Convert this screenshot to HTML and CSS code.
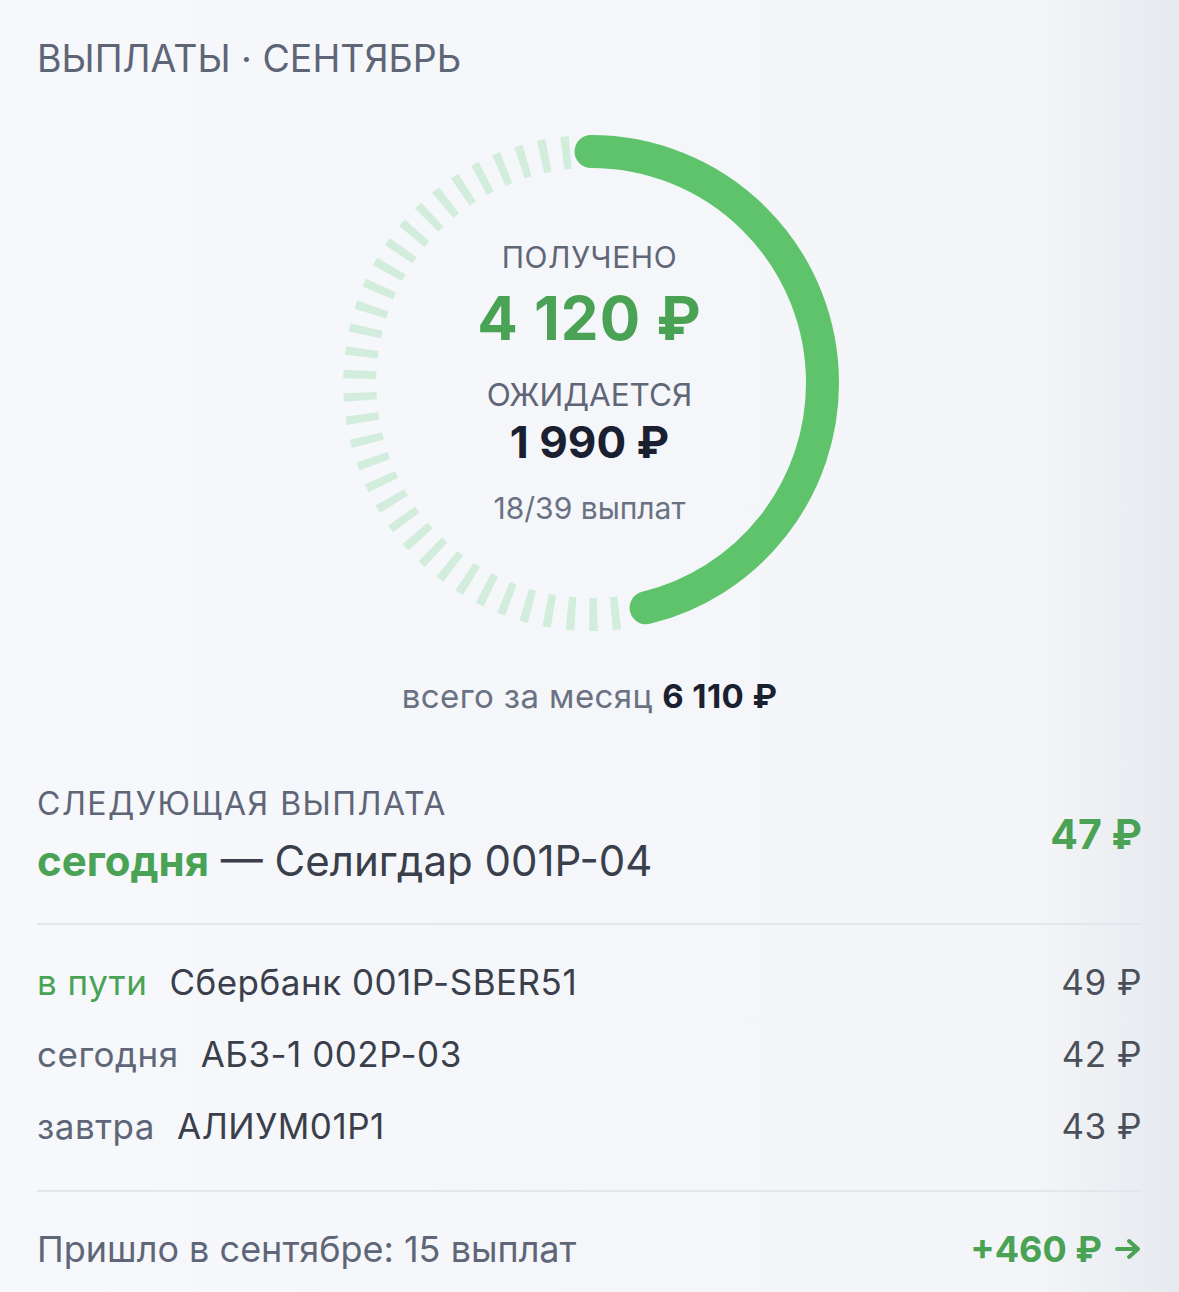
FILE: index.html
```html
<!DOCTYPE html>
<html lang="ru">
<head>
<meta charset="utf-8">
<title>Выплаты</title>
<link rel="stylesheet" href="styles.css">
</head>
<body>
<div class="page">
  <div class="title">ВЫПЛАТЫ · СЕНТЯБРЬ</div>

  <div class="ring">
    <svg class="ring-svg" viewBox="0 0 496 496" width="496" height="496">
      <path class="ticks" d="M 276.2 477.8 A 231.5 231.5 0 1 1 227.8 17.4"/>
      <circle class="progress" cx="248" cy="248" r="231.5" transform="rotate(-90 248 248)"/>
    </svg>
    <div class="ring-text">
      <div class="lbl lbl-got">ПОЛУЧЕНО</div>
      <div class="got">4 120 ₽</div>
      <div class="lbl lbl-exp">ОЖИДАЕТСЯ</div>
      <div class="exp">1 990 ₽</div>
      <div class="count">18/39 выплат</div>
    </div>
  </div>

  <div class="total">всего за месяц <b>6 110 ₽</b></div>

  <div class="next">
    <div class="next-info">
      <div class="next-label">СЛЕДУЮЩАЯ ВЫПЛАТА</div>
      <div class="next-name"><span class="green-b">сегодня</span> — Селигдар 001P-04</div>
    </div>
    <div class="next-sum">47 ₽</div>
  </div>

  <div class="divider"></div>

  <div class="rows">
    <div class="row">
      <div class="row-left"><span class="when when-green">в пути</span><span class="name">Сбербанк 001P-SBER51</span></div>
      <div class="sum">49 ₽</div>
    </div>
    <div class="row">
      <div class="row-left"><span class="when">сегодня</span><span class="name">АБЗ-1 002P-03</span></div>
      <div class="sum">42 ₽</div>
    </div>
    <div class="row">
      <div class="row-left"><span class="when">завтра</span><span class="name">АЛИУМ01P1</span></div>
      <div class="sum">43 ₽</div>
    </div>
  </div>

  <div class="divider divider-2"></div>

  <div class="footer">
    <div class="foot-text">Пришло в сентябре: 15 выплат</div>
    <div class="foot-sum">+460 ₽
      <svg class="arrow" viewBox="0 0 28 22" width="28" height="22">
        <path d="M3 11 H24 M15 3 L24 11 L15 19"/>
      </svg>
    </div>
  </div>
</div>
</body>
</html>
```

FILE: styles.css
```css
html, body {
  margin: 0;
  padding: 0;
}
body {
  width: 1179px;
  height: 1292px;
  overflow: hidden;
  background: linear-gradient(90deg, #f6f8fb 0%, #f3f5f8 88%, #e6e9ee 100%);
  font-family: Inter, "Noto Sans", sans-serif;
  color: #5f6677;
}
.page {
  padding: 36px 37px 0 37px;
}
.title {
  font-size: 37.5px;
  line-height: 46px;
  letter-spacing: 0;
  color: #5e6576;
}
.ring {
  margin-top: 53px;
  display: grid;
  justify-content: center;
  padding-left: 3px;
}
.ring-svg, .ring-text {
  grid-area: 1 / 1;
}
.ring-svg {
  display: block;
}
.ticks {
  fill: none;
  stroke: #d2eddb;
  stroke-width: 33;
  stroke-dasharray: 8 14;
}
.progress {
  fill: none;
  stroke: #5fc36b;
  stroke-width: 33;
  stroke-linecap: round;
  stroke-dasharray: 671.3 2000;
}
.ring-text {
  display: flex;
  flex-direction: column;
  align-items: center;
  padding-top: 104px;
  margin-left: -3px;
}
.lbl {
  color: #5f6677;
}
.lbl-got {
  font-size: 30px;
  line-height: 36px;
  letter-spacing: 0.6px;
}
.got {
  margin-top: 11px;
  font-size: 60px;
  line-height: 64px;
  font-weight: 700;
  letter-spacing: 1px;
  color: #4aa255;
}
.lbl-exp {
  margin-top: 25px;
  font-size: 31.5px;
  line-height: 40px;
  letter-spacing: 0;
}
.exp {
  margin-top: 2px;
  font-size: 44px;
  line-height: 50px;
  font-weight: 700;
  color: #1b2030;
}
.count {
  margin-top: 22px;
  font-size: 30px;
  line-height: 38px;
  color: #6a7182;
}
.total {
  margin-top: 46px;
  text-align: center;
  font-size: 33px;
  line-height: 38px;
  letter-spacing: 0.4px;
  color: #6a7182;
}
.total b {
  font-weight: 700;
  color: #1b2030;
}
.next {
  margin-top: 69px;
  display: flex;
  justify-content: space-between;
  align-items: center;
}
.next-label {
  font-size: 32px;
  line-height: 40px;
  letter-spacing: 1.5px;
  color: #5f6677;
}
.next-name {
  margin-top: 10px;
  font-size: 42px;
  line-height: 54px;
  color: #3a3f4b;
}
.green-b {
  color: #4aa255;
  font-weight: 700;
}
.next-sum {
  font-size: 41px;
  line-height: 48px;
  font-weight: 700;
  color: #4aa255;
  margin-top: -4px;
}
.divider {
  margin-top: 35px;
  height: 2px;
  background: #e3e6eb;
}
.rows {
  margin-top: 21px;
}
.row {
  display: flex;
  justify-content: space-between;
  align-items: baseline;
  font-size: 35px;
  line-height: 72px;
  letter-spacing: 0.5px;
}
.when {
  color: #5f6677;
  margin-right: 22px;
}
.when-green {
  color: #4aa255;
}
.name {
  color: #3a3f4b;
}
.sum {
  color: #4a4f5a;
}
.divider-2 {
  margin-top: 28px;
}
.footer {
  margin-top: 35px;
  display: flex;
  justify-content: space-between;
  align-items: center;
  line-height: 44px;
}
.foot-text {
  font-size: 36px;
  color: #5f6677;
}
.foot-sum {
  display: flex;
  align-items: center;
  gap: 12px;
  font-size: 36px;
  font-weight: 700;
  color: #4aa255;
}
.arrow {
  display: block;
}
.arrow path {
  fill: none;
  stroke: #4aa255;
  stroke-width: 4;
  stroke-linecap: round;
  stroke-linejoin: round;
}
```
